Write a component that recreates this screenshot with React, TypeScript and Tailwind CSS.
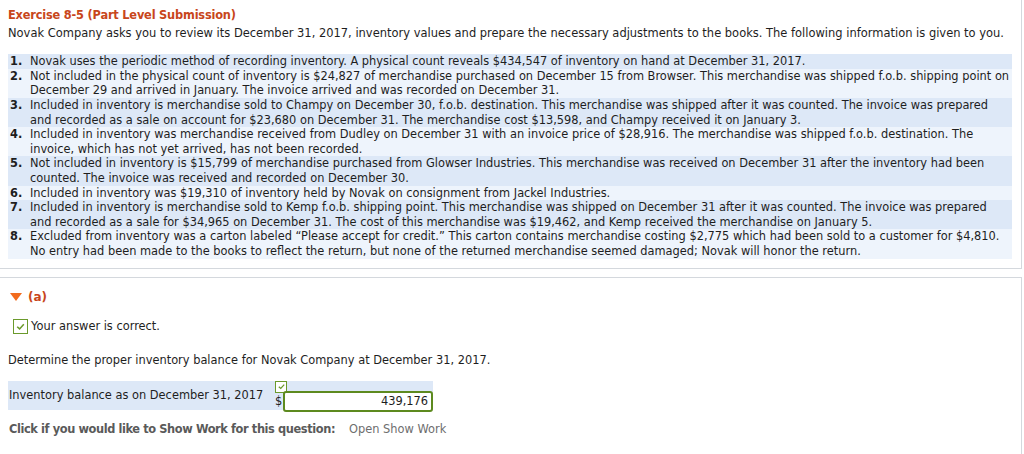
const items: string[][] = [
  ["Novak uses the periodic method of recording inventory. A physical count reveals $434,547 of inventory on hand at December 31, 2017."],
  [
    "Not included in the physical count of inventory is $24,827 of merchandise purchased on December 15 from Browser. This merchandise was shipped f.o.b. shipping point on",
    "December 29 and arrived in January. The invoice arrived and was recorded on December 31.",
  ],
  [
    "Included in inventory is merchandise sold to Champy on December 30, f.o.b. destination. This merchandise was shipped after it was counted. The invoice was prepared",
    "and recorded as a sale on account for $23,680 on December 31. The merchandise cost $13,598, and Champy received it on January 3.",
  ],
  [
    "Included in inventory was merchandise received from Dudley on December 31 with an invoice price of $28,916. The merchandise was shipped f.o.b. destination. The",
    "invoice, which has not yet arrived, has not been recorded.",
  ],
  [
    "Not included in inventory is $15,799 of merchandise purchased from Glowser Industries. This merchandise was received on December 31 after the inventory had been",
    "counted. The invoice was received and recorded on December 30.",
  ],
  ["Included in inventory was $19,310 of inventory held by Novak on consignment from Jackel Industries."],
  [
    "Included in inventory is merchandise sold to Kemp f.o.b. shipping point. This merchandise was shipped on December 31 after it was counted. The invoice was prepared",
    "and recorded as a sale for $34,965 on December 31. The cost of this merchandise was $19,462, and Kemp received the merchandise on January 5.",
  ],
  [
    "Excluded from inventory was a carton labeled \u201cPlease accept for credit.\u201d This carton contains merchandise costing $2,775 which had been sold to a customer for $4,810.",
    "No entry had been made to the books to reflect the return, but none of the returned merchandise seemed damaged; Novak will honor the return.",
  ],
];

function Check({ className }: { className?: string }) {
  return (
    <svg viewBox="0 0 10 10" className={className}>
      <path d="M2 5.2 L4.2 7.2 L8 3" fill="none" stroke="#6b9a2c" strokeWidth="1.4" />
    </svg>
  );
}

export default function App() {
  return (
    <div className="w-[1024px] h-[454px] overflow-hidden bg-white font-['DejaVu_Sans',sans-serif] text-[11.4px] leading-[14.6px] text-[#1e1e1e]">
      <div className="w-[1022px] border-r border-b border-[#d4d8dd] pl-2 pr-[9px] pt-2 pb-[9px]">
        <div className="font-bold tracking-[-0.2px] text-[#c8461b]">Exercise 8-5 (Part Level Submission)</div>
        <div className="mt-[3px] whitespace-nowrap text-[11.48px]">
          Novak Company asks you to review its December 31, 2017, inventory values and prepare the necessary adjustments to the books. The following information is given to you.
        </div>
        <ol className="mt-[14px]">
          {items.map((lines, i) => (
            <li key={i} className={`flex pl-[2px] ${i % 2 === 0 ? "bg-[#dde8f7]" : "bg-[#eef4fc]"}`}>
              <span className="w-[20px] shrink-0 font-bold">{i + 1}.</span>
              <div className="whitespace-nowrap">
                {lines.map((l, j) => (
                  <div key={j}>{l}</div>
                ))}
              </div>
            </li>
          ))}
        </ol>
      </div>

      <div className="mt-2 w-[1022px] border-t border-r border-[#d4d8dd] pl-2 pt-[12px] h-[180px]">
        <div className="flex items-center gap-[6px] pl-[2px]">
          <svg width="12" height="8" viewBox="0 0 12 8">
            <path d="M0 0 H12 L6 8 Z" fill="#f26b1d" />
          </svg>
          <span className="font-bold text-[12px] text-[#c8461b]">(a)</span>
        </div>
        <div className="mt-[15px] flex items-center gap-[3px] pl-[5px]">
          <span className="flex h-[15px] w-[15px] items-center justify-center border border-[#6b9a2c] bg-white">
            <Check className="h-[11px] w-[11px]" />
          </span>
          <span>Your answer is correct.</span>
        </div>
        <div className="mt-[19px]">Determine the proper inventory balance for Novak Company at December 31, 2017.</div>
        <div className="mt-[13px] flex h-[29px] w-[425px] items-center bg-[#dde8f7] pl-px">
          <span className="w-[266px] shrink-0 whitespace-nowrap">Inventory balance as on December 31, 2017</span>
          <div className="flex h-full w-[8px] flex-col">
            <span className="flex h-[12px] w-[12px] items-center justify-center border border-[#6b9a2c] bg-white">
              <Check className="h-[9px] w-[9px]" />
            </span>
            <span className="mt-px leading-[14px]">$</span>
          </div>
          <div className="mt-[12px] flex h-[21px] w-[151px] items-center justify-end rounded-[3px] border-2 border-[#5d8a1f] bg-white pr-[3px]">
            439,176
          </div>
        </div>
        <div className="mt-[12px] flex pl-px text-[#5a5a5a]">
          <span className="font-bold tracking-[-0.4px]">Click if you would like to Show Work for this question:</span>
          <span className="ml-[14px] text-[#6e6e6e]">Open Show Work</span>
        </div>
      </div>
    </div>
  );
}
